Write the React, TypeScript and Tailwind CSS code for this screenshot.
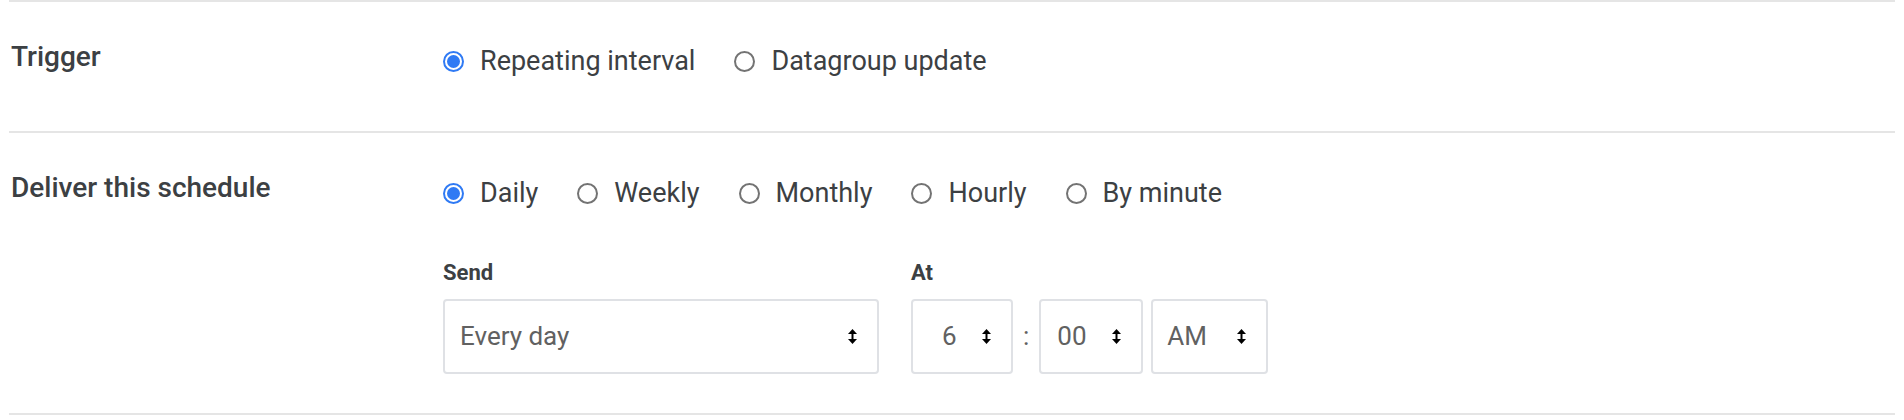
import React from "react";

const font = { fontFamily: "Roboto, 'Noto Sans', Arial, sans-serif" };

function Radio({ label, checked }: { label: string; checked?: boolean }) {
  return (
    <label className="flex items-center mr-[39px] h-[40px]">
      {checked ? (
        <span className="w-[21px] h-[21px] rounded-full border-[2px] border-[#2f7af4] bg-white flex items-center justify-center">
          <span className="w-[13px] h-[13px] rounded-full bg-[#2f7af4]" />
        </span>
      ) : (
        <span className="w-[21px] h-[21px] rounded-full border-[2px] border-[#737373] bg-white" />
      )}
      <span className="ml-[16px] text-[27px] leading-[40px] text-[#3c4043]">{label}</span>
    </label>
  );
}

function Arrows() {
  return (
    <svg width="9" height="15" viewBox="0 0 9 15" className="shrink-0">
      <path d="M4.5 0 L9 5 L0 5 Z" fill="#000" />
      <rect x="3.5" y="4" width="2" height="7" fill="#000" />
      <path d="M0 10 L9 10 L4.5 15 Z" fill="#000" />
    </svg>
  );
}

function Select({ value, width, pl }: { value: string; width: string; pl: string }) {
  return (
    <div
      className={`h-[75px] border-[2px] border-[#dfe1e5] rounded-[4px] bg-white flex items-center justify-between pr-[20px] ${width} ${pl}`}
    >
      <span className="text-[26px] text-[#616161]">{value}</span>
      <Arrows />
    </div>
  );
}

export default function App() {
  return (
    <div className="bg-white w-[1904px] h-[420px]" style={font}>
      <div className="mx-[9px]">
        {/* Row 1 */}
        <div className="border-t-[2px] border-[#e5e5e5] h-[131px] grid grid-cols-[434px_1fr]">
          <div className="pl-[2px] pt-[34px] text-[28px] leading-[42px] font-medium text-[#3c4043]">Trigger</div>
          <div className="pt-[39px] flex">
            <Radio label="Repeating interval" checked />
            <Radio label="Datagroup update" />
          </div>
        </div>
        {/* Row 2 */}
        <div className="border-t-[2px] border-[#e5e5e5] grid grid-cols-[434px_1fr] pb-[39px]">
          <div className="pl-[2px] pt-[34px] text-[28px] leading-[42px] font-medium text-[#3c4043]">
            Deliver this schedule
          </div>
          <div className="pt-[40px]">
            <div className="flex">
              <Radio label="Daily" checked />
              <Radio label="Weekly" />
              <Radio label="Monthly" />
              <Radio label="Hourly" />
              <Radio label="By minute" />
            </div>
            <div className="flex mt-[44px] gap-[32px]">
              <div className="flex flex-col">
                <div className="text-[22px] leading-[32px] font-bold text-[#3c4043] mb-[10px]">Send</div>
                <Select value="Every day" width="w-[436px]" pl="pl-[15px]" />
              </div>
              <div className="flex flex-col">
                <div className="text-[22px] leading-[32px] font-bold text-[#3c4043] mb-[10px]">At</div>
                <div className="flex items-center">
                  <Select value="6" width="w-[102px]" pl="pl-[29px]" />
                  <span className="mx-[10px] text-[26px] text-[#616161]">:</span>
                  <Select value="00" width="w-[104px]" pl="pl-[16px]" />
                  <div className="ml-[8px]">
                    <Select value="AM" width="w-[117px]" pl="pl-[14px]" />
                  </div>
                </div>
              </div>
            </div>
          </div>
        </div>
        <div className="border-t-[2px] border-[#e5e5e5]" />
      </div>
    </div>
  );
}
